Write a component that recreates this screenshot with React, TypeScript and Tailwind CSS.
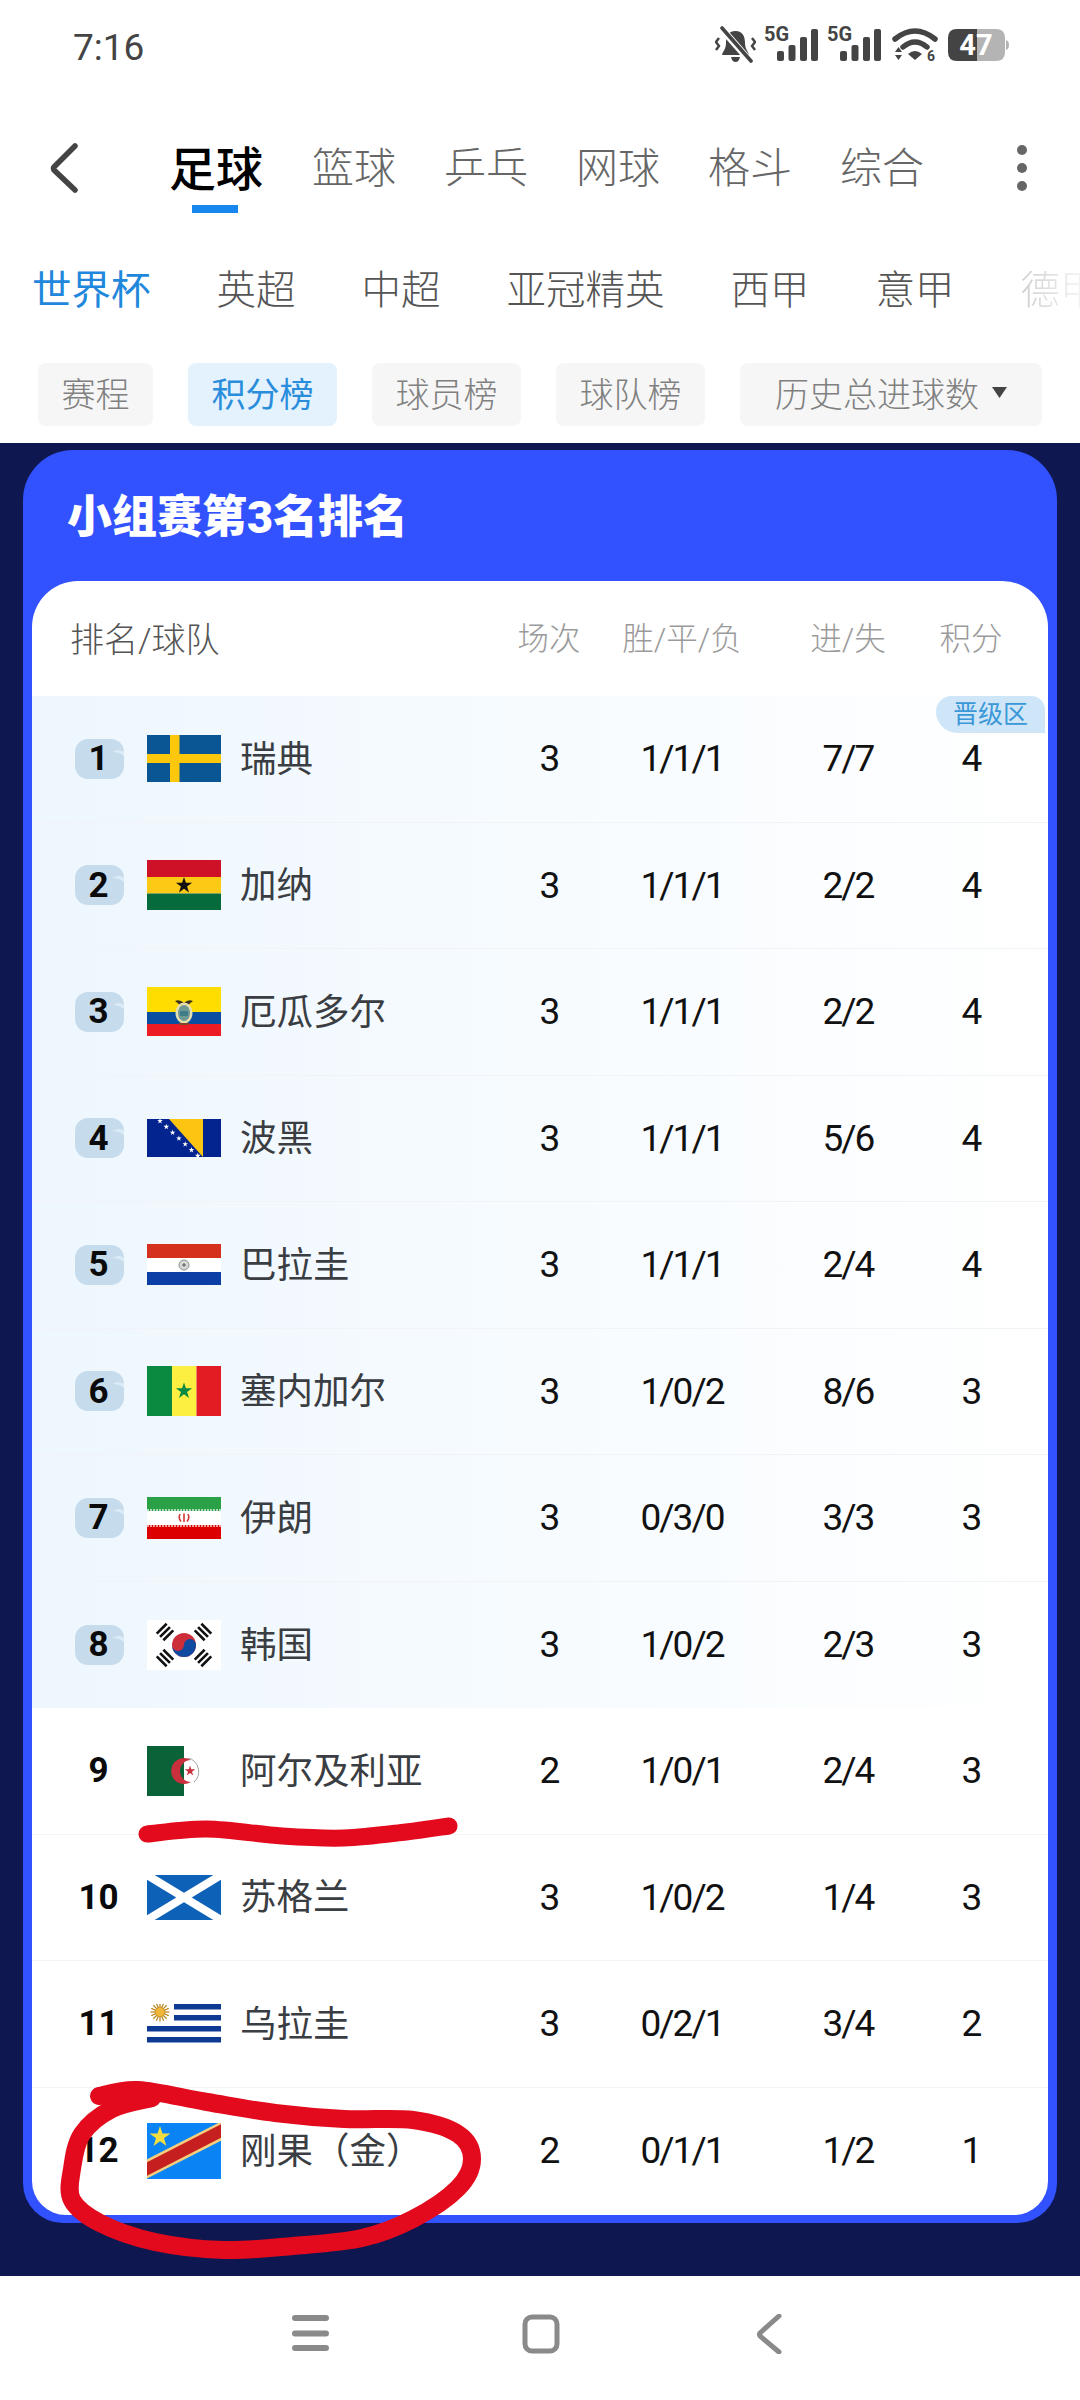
import React from "react";

const star = (cx: number, cy: number, r: number, inner = 0.382) => {
  const p: string[] = [];
  for (let i = 0; i < 10; i++) {
    const a = -Math.PI / 2 + (i * Math.PI) / 5;
    const rr = i % 2 === 0 ? r : r * inner;
    p.push(`${(cx + rr * Math.cos(a)).toFixed(2)},${(cy + rr * Math.sin(a)).toFixed(2)}`);
  }
  return p.join(" ");
};

const smooth = (pts: number[][]) => {
  let d = `M${pts[0][0]} ${pts[0][1]}`;
  for (let i = 0; i < pts.length - 1; i++) {
    const p0 = pts[Math.max(i - 1, 0)];
    const p1 = pts[i];
    const p2 = pts[i + 1];
    const p3 = pts[Math.min(i + 2, pts.length - 1)];
    d += ` C${(p1[0] + (p2[0] - p0[0]) / 6).toFixed(1)} ${(p1[1] + (p2[1] - p0[1]) / 6).toFixed(1)} ${(p2[0] - (p3[0] - p1[0]) / 6).toFixed(1)} ${(p2[1] - (p3[1] - p1[1]) / 6).toFixed(1)} ${p2[0]} ${p2[1]}`;
  }
  return d;
};

const Flag = ({ h, children }: { h: number; children: React.ReactNode }) => (
  <svg width={74} height={h} viewBox={`0 0 74 ${h}`} className="shrink-0">
    {children}
  </svg>
);

const Sweden = () => (
  <Flag h={47}>
    <rect width="74" height="47" fill="#0a5593" />
    <rect x="23" width="9.5" height="47" fill="#fdc70c" />
    <rect y="19" width="74" height="9" fill="#fdc70c" />
  </Flag>
);
const Ghana = () => (
  <Flag h={50}>
    <rect width="74" height="17" fill="#ce1126" />
    <rect y="17" width="74" height="16.5" fill="#fcc915" />
    <rect y="33.5" width="74" height="16.5" fill="#066b3c" />
    <polygon points={star(37, 25.5, 8.5)} fill="#111" />
  </Flag>
);
const Ecuador = () => (
  <Flag h={49}>
    <rect width="74" height="25" fill="#ffdd00" />
    <rect y="25" width="74" height="12" fill="#0a4ea2" />
    <rect y="37" width="74" height="12" fill="#ed1c24" />
    <path d="M28 14 Q33 12 37 16 Q41 12 46 14 L41 18 L33 18Z" fill="#3a3320" />
    <ellipse cx="37" cy="26" rx="8.5" ry="10.5" fill="#e9dfae" />
    <ellipse cx="37" cy="26" rx="6" ry="8" fill="#6f9a94" />
    <rect x="33" y="24" width="8" height="5" fill="#3e7c88" />
    <path d="M31 36 L43 36 L41 38 L33 38Z" fill="#7a4a2a" />
  </Flag>
);
const Bosnia = () => {
  const stars = Array.from({ length: 7 }, (_, i) => [13 + i * 6.3, 2 + i * 5.8]);
  return (
    <Flag h={38}>
      <rect width="74" height="38" fill="#03248f" />
      <polygon points="22,0 56,0 56,38" fill="#fdc512" />
      {stars.map((s, i) => (
        <polygon key={i} points={star(s[0], s[1], 3)} fill="#fff" />
      ))}
    </Flag>
  );
};
const Paraguay = () => (
  <Flag h={41}>
    <rect width="74" height="14" fill="#d5301e" />
    <rect y="14" width="74" height="14" fill="#fff" />
    <rect y="28" width="74" height="13" fill="#0d3ea6" />
    <circle cx="37" cy="21" r="5" fill="#d8dcd8" stroke="#8a8f8a" strokeWidth="1" />
    <circle cx="37" cy="21" r="1.8" fill="#777" />
  </Flag>
);
const Senegal = () => (
  <Flag h={50}>
    <rect width="25" height="50" fill="#0a8a40" />
    <rect x="25" width="24.5" height="50" fill="#fdef42" />
    <rect x="49.5" width="24.5" height="50" fill="#e31b23" />
    <polygon points={star(37, 25, 8.5)} fill="#0a8a40" />
  </Flag>
);
const Iran = () => (
  <Flag h={42}>
    <rect width="74" height="14" fill="#2aa146" />
    <rect y="14" width="74" height="14" fill="#fff" />
    <rect y="28" width="74" height="14" fill="#dc0000" />
    <line x1="0" y1="13" x2="74" y2="13" stroke="#d8efdd" strokeWidth="1.4" strokeDasharray="2 1" />
    <line x1="0" y1="29" x2="74" y2="29" stroke="#f8d5d5" strokeWidth="1.4" strokeDasharray="2 1" />
    <path d="M33 17 Q31 21 34 24.5 M41 17 Q43 21 40 24.5 M37 16.5 V25" stroke="#d43a3a" strokeWidth="1.6" fill="none" />
  </Flag>
);
const Trigram = ({ x, y, a }: { x: number; y: number; a: number }) => (
  <g transform={`translate(${x} ${y}) rotate(${a})`} fill="#111">
    <rect x="-7" y="-6" width="14" height="2.6" />
    <rect x="-7" y="-1.3" width="14" height="2.6" />
    <rect x="-7" y="3.4" width="14" height="2.6" />
  </g>
);
const Korea = () => (
  <Flag h={50}>
    <rect width="74" height="50" fill="#fff" />
    <circle cx="37" cy="25" r="12" fill="#cd2e3a" />
    <path d="M25 25 A12 12 0 0 0 49 25 A6 6 0 0 0 37 25 A6 6 0 0 1 25 25Z" fill="#0f4aa0" />
    <Trigram x={18} y={12} a={-45} />
    <Trigram x={56} y={12} a={45} />
    <Trigram x={18} y={38} a={45} />
    <Trigram x={56} y={38} a={-45} />
  </Flag>
);
const Algeria = () => (
  <Flag h={50}>
    <rect width="37" height="50" fill="#0a6238" />
    <path d="M44 14 A13 13 0 1 0 44 36 A11 11 0 1 1 44 14Z" fill="#c9303e" />
    <path d="M41 12 A14 14 0 0 1 47 36" stroke="#666" strokeWidth="0.6" fill="none" />
    <polygon points={star(43, 25, 5.5)} fill="#c9303e" />
  </Flag>
);
const Scotland = () => (
  <Flag h={45}>
    <rect width="74" height="45" fill="#0d62b8" />
    <path d="M0 0 L74 45 M74 0 L0 45" stroke="#fff" strokeWidth="8" />
  </Flag>
);
const Uruguay = () => (
  <Flag h={39}>
    <rect x="27" y="0" width="47" height="5.5" fill="#0f3a94" />
    <rect x="27" y="11" width="47" height="5.5" fill="#0f3a94" />
    <rect y="22" width="74" height="5.5" fill="#0f3a94" />
    <rect y="33" width="74" height="5.5" fill="#0f3a94" />
    {Array.from({ length: 16 }, (_, i) => {
      const a = (i * Math.PI) / 8;
      return (
        <line
          key={i}
          x1={13 + 4 * Math.cos(a)}
          y1={8 + 4 * Math.sin(a)}
          x2={13 + 9.5 * Math.cos(a)}
          y2={8 + 9.5 * Math.sin(a)}
          stroke="#b8821a"
          strokeWidth="1.2"
        />
      );
    })}
    <circle cx="13" cy="8" r="4.8" fill="#f0b73a" stroke="#b8821a" strokeWidth="0.6" />
  </Flag>
);
const Congo = () => (
  <Flag h={56}>
    <rect width="74" height="56" fill="#0a83f5" />
    <path d="M-10 51 L84 3" stroke="#f5cf7e" strokeWidth="17" />
    <path d="M-10 51 L84 3" stroke="#c61f1f" strokeWidth="12" />
    <polygon points={star(13, 14, 11)} fill="#f4dd3f" />
  </Flag>
);

const rows: [string, React.ReactNode, string, string, string, string, string][] = [
  ["1", <Sweden />, "瑞典", "3", "1/1/1", "7/7", "4"],
  ["2", <Ghana />, "加纳", "3", "1/1/1", "2/2", "4"],
  ["3", <Ecuador />, "厄瓜多尔", "3", "1/1/1", "2/2", "4"],
  ["4", <Bosnia />, "波黑", "3", "1/1/1", "5/6", "4"],
  ["5", <Paraguay />, "巴拉圭", "3", "1/1/1", "2/4", "4"],
  ["6", <Senegal />, "塞内加尔", "3", "1/0/2", "8/6", "3"],
  ["7", <Iran />, "伊朗", "3", "0/3/0", "3/3", "3"],
  ["8", <Korea />, "韩国", "3", "1/0/2", "2/3", "3"],
  ["9", <Algeria />, "阿尔及利亚", "2", "1/0/1", "2/4", "3"],
  ["10", <Scotland />, "苏格兰", "3", "1/0/2", "1/4", "3"],
  ["11", <Uruguay />, "乌拉圭", "3", "0/2/1", "3/4", "2"],
  ["12", <Congo />, "刚果（金）", "2", "0/1/1", "1/2", "1"],
];

const Row = ({ r, idx }: { r: (typeof rows)[number]; idx: number }) => (
  <div className="relative grid h-[126.5px] grid-cols-[468px_98px_168px_164px_82px] items-center border-b border-[#f1f3f6] last:border-b-0">
    <div className="flex items-center pl-[43px]">
      {idx < 8 ? (
        <div className="relative flex h-[40px] w-[49px] shrink-0 items-center justify-center rounded-[13px] bg-[#c6dcec]">
          <svg width="49" height="40" viewBox="0 0 49 40" className="absolute left-0 top-0">
            <path d="M38 13 Q44 9 49 13 V17 Q44 13 38 13Z" fill="#dcebf6" />
          </svg>
          <span className="relative -translate-x-[1px] text-[35px] font-bold leading-none text-[#0a0a0a]">{r[0]}</span>
        </div>
      ) : (
        <div className="flex h-[40px] w-[49px] shrink-0 items-center justify-center">
          <span className="-translate-x-[1px] text-[35px] font-bold leading-none text-[#0a0a0a]">{r[0]}</span>
        </div>
      )}
      <div className="ml-[23px] flex w-[74px] shrink-0 items-center">{r[1]}</div>
      <span className="ml-[19px] whitespace-nowrap pt-[2px] text-[36.5px] leading-none text-[#3a3d42]">{r[2]}</span>
    </div>
    {[r[3], r[4], r[5], r[6]].map((v, i) => (
      <div key={i} className="text-center text-[37px] leading-none tracking-[-2px] text-[#111]">
        {v}
      </div>
    ))}
    {idx === 0 && (
      <div className="absolute right-[3px] top-0 flex h-[37px] w-[109px] items-center justify-center rounded-bl-[22px] rounded-tl-[16px] rounded-tr-[14px] bg-[#cfe6f8] text-[25px] leading-none text-[#3b98d8]">
        晋级区
      </div>
    )}
  </div>
);

const Signal = () => (
  <svg width="55" height="38" viewBox="0 0 55 38" className="overflow-visible">
    <text x="0" y="15" fontSize="20" fontWeight="700" fill="#444" fontFamily="Roboto, sans-serif">5G</text>
    <rect x="13" y="25" width="7" height="10" rx="2" fill="#444" />
    <rect x="24.5" y="19" width="7" height="16" rx="2" fill="#444" />
    <rect x="36" y="11" width="7" height="24" rx="2" fill="#444" />
    <rect x="47" y="3" width="7" height="32" rx="2" fill="#444" />
  </svg>
);

export default function App() {
  const tabs = ["篮球", "乒乓", "网球", "格斗", "综合"];
  const leagues = ["英超", "中超", "亚冠精英", "西甲", "意甲"];
  return (
    <div className="relative flex h-[2400px] w-[1080px] flex-col overflow-hidden bg-white font-['Roboto','Noto_Sans_CJK_SC',sans-serif]">
      {/* status bar */}
      <div className="flex h-[90px] shrink-0 items-center pl-[73px] pr-[71px]">
        <span className="pt-[4px] text-[37px] leading-none text-[#444]">7:16</span>
        <div className="ml-auto flex items-center">
          <svg width="41" height="38" viewBox="0 0 41 38">
            <path d="M20.5 5 C13 5 11 11 11 17 C11 23 8 25 7 29 H34 C33 25 30 23 30 17 C30 11 28 5 20.5 5Z" fill="#444" />
            <path d="M16 31 H25 Q24 36 20.5 36 Q17 36 16 31Z" fill="#444" />
            <path d="M6 2 L35 35" stroke="#fff" strokeWidth="7" />
            <path d="M7 2 L36 35" stroke="#444" strokeWidth="3.6" strokeLinecap="round" />
            <path d="M4 12 L1 16 L4 20 L1 24 M37 12 L40 16 L37 20 L40 24" stroke="#444" strokeWidth="2.4" fill="none" />
          </svg>
          <div className="ml-[8px]"><Signal /></div>
          <div className="ml-[8px]"><Signal /></div>
          <svg width="44" height="34" viewBox="0 0 44 34" className="ml-[11px] overflow-visible">
            <path d="M2 11 Q22 -5 42 11" stroke="#444" strokeWidth="5.5" fill="none" strokeLinecap="round" />
            <path d="M10 19 Q22 9 34 19" stroke="#444" strokeWidth="5.5" fill="none" strokeLinecap="round" />
            <path d="M15 26 Q22 20 29 26 L22 32Z" fill="#444" />
            <path d="M2 24 L5.5 19 L9 24Z M2 27 L9 27 L5.5 32Z" fill="#444" />
            <text x="34" y="33" fontSize="14" fontWeight="700" fill="#444" fontFamily="Roboto, sans-serif">6</text>
          </svg>
          <svg width="61" height="32" viewBox="0 0 61 32" className="ml-[11px]">
            <path d="M29 0 H48 Q57 0 57 9 V23 Q57 32 48 32 H29Z" fill="#b4b4b4" />
            <path d="M29 0 H9 Q0 0 0 9 V23 Q0 32 9 32 H29Z" fill="#444" />
            <path d="M58 11 Q61 12 61 16 Q61 20 58 21Z" fill="#b4b4b4" />
            <text x="28" y="26" textAnchor="middle" fontSize="29" fontWeight="700" fill="#fff" fontFamily="Roboto, sans-serif">47</text>
          </svg>
        </div>
      </div>

      {/* sport tabs */}
      <div className="flex h-[124px] shrink-0 items-center pl-[50px] pr-[53px] pt-[34px]">
        <svg width="28" height="50" viewBox="0 0 28 50" className="shrink-0 -translate-y-[1px]">
          <path d="M25 3 L4 24 Q3 25 4 27 L25 47" stroke="#444" strokeWidth="5.5" fill="none" strokeLinecap="round" />
        </svg>
        <div className="relative ml-[91px] text-[47px] font-medium leading-none text-black">
          足球
          <div className="absolute left-[23px] top-[59px] h-[8px] w-[46px] bg-[#1786ef]" />
        </div>
        <div className="ml-[49px] flex gap-[48px]">
          {tabs.map((t) => (
            <span key={t} className="text-[42px] font-light leading-none text-[#666]">{t}</span>
          ))}
        </div>
        <div className="ml-auto flex -translate-y-[1px] flex-col gap-[8px]">
          <div className="h-[10px] w-[10px] rounded-full bg-[#666]" />
          <div className="h-[10px] w-[10px] rounded-full bg-[#666]" />
          <div className="h-[10px] w-[10px] rounded-full bg-[#666]" />
        </div>
      </div>

      {/* league tabs */}
      <div className="flex h-[149px] shrink-0 items-center gap-[66px] overflow-hidden whitespace-nowrap pl-[32px] pt-[4px] text-[39.5px] leading-none">
        <span className="text-[#1f88dc]">世界杯</span>
        {leagues.map((t) => (
          <span key={t} className="font-light text-[#555]">{t}</span>
        ))}
        <span className="shrink-0 bg-gradient-to-r from-[#cfcfcf] to-white bg-clip-text font-light text-transparent">德甲</span>
      </div>

      {/* filter buttons */}
      <div className="flex h-[63px] shrink-0 gap-[35px] pl-[38px] text-[34px] font-light leading-none">
        <div className="flex w-[115px] items-center justify-center rounded-[8px] bg-[#f6f6f6] pt-[1px] text-[#808080]">赛程</div>
        <div className="flex w-[149px] items-center justify-center rounded-[8px] bg-[#e3f2fd] pt-[1px] font-normal text-[#2a8ddc]">积分榜</div>
        <div className="flex w-[149px] items-center justify-center rounded-[8px] bg-[#f6f6f6] pt-[1px] text-[#808080]">球员榜</div>
        <div className="flex w-[149px] items-center justify-center rounded-[8px] bg-[#f6f6f6] pt-[1px] text-[#808080]">球队榜</div>
        <div className="flex w-[302px] items-center rounded-[8px] bg-[#f6f6f6] pl-[35px] pt-[1px] text-[#808080]">
          历史总进球数
          <svg width="15" height="11" viewBox="0 0 15 11" className="ml-[13px] -translate-y-[3px]">
            <polygon points="0,0 15,0 7.5,11" fill="#444" />
          </svg>
        </div>
      </div>

      {/* content */}
      <div className="mt-[17px] flex-1 bg-[#0e1750] px-[23px] pt-[7px]">
        <div className="flex h-[1773px] flex-col rounded-b-[40px] rounded-t-[50px] bg-[#3352ff] px-[9px] pb-[8px]">
          <div className="flex h-[131px] shrink-0 items-center pl-[35px] pt-[4px] text-[45px] font-black leading-none text-white">
            小组赛第3名排名
          </div>
          <div className="flex-1 overflow-hidden rounded-b-[34px] rounded-t-[46px] bg-white">
            <div className="grid h-[115px] grid-cols-[468px_98px_168px_164px_82px] items-center pt-[2px] text-[31.5px] leading-none text-[#9a9a9a]">
              <div className="pl-[38px] text-[34px] font-light text-[#555]">排名/球队</div>
              <div className="text-center font-light">场次</div>
              <div className="text-center font-light">胜/平/负</div>
              <div className="text-center font-light">进/失</div>
              <div className="text-center font-light">积分</div>
            </div>
            <div className="bg-gradient-to-r from-[#eef7fe] to-white">
              {rows.slice(0, 8).map((r, i) => (
                <Row key={r[0]} r={r} idx={i} />
              ))}
            </div>
            {rows.slice(8).map((r, i) => (
              <Row key={r[0]} r={r} idx={i + 8} />
            ))}
          </div>
        </div>
      </div>

      {/* bottom nav */}
      <div className="flex h-[124px] shrink-0 items-start gap-[193px] pl-[292px] pt-[38px]">
        <svg width="37" height="38" viewBox="0 0 37 38">
          <path d="M3 4 H34 M3 19.5 H34 M3 34 H34" stroke="#8a8a8a" strokeWidth="6" strokeLinecap="round" />
        </svg>
        <svg width="38" height="40" viewBox="0 0 38 40">
          <rect x="3" y="3" width="32" height="34" rx="7" stroke="#8a8a8a" strokeWidth="5" fill="none" />
        </svg>
        <svg width="26" height="40" viewBox="0 0 26 40" className="ml-[3px]">
          <path d="M23 2 L4 19 Q3 20 4 22 L23 38" stroke="#8a8a8a" strokeWidth="5" fill="none" strokeLinecap="round" />
        </svg>
      </div>

      {/* hand-drawn red annotations over the screenshot */}
      <svg width="1080" height="2400" viewBox="0 0 1080 2400" className="pointer-events-none absolute left-0 top-0">
        <path
          d={smooth([[147, 1834], [207, 1829], [282, 1836], [344, 1838], [406, 1832], [449, 1826]])}
          stroke="#e30a1d"
          strokeWidth="17"
          fill="none"
          strokeLinecap="round"
        />
        <path
          d={smooth([[99, 2096], [138, 2090], [207, 2102], [275, 2113], [344, 2119], [413, 2120], [458, 2134], [472, 2159], [458, 2188], [413, 2219], [362, 2238], [293, 2246], [224, 2250], [155, 2242], [100, 2223], [72, 2200], [72, 2169], [82, 2134], [112, 2109], [152, 2098]])}
          stroke="#e30a1d"
          strokeWidth="18"
          fill="none"
          strokeLinecap="round"
          strokeLinejoin="round"
        />
      </svg>
    </div>
  );
}
